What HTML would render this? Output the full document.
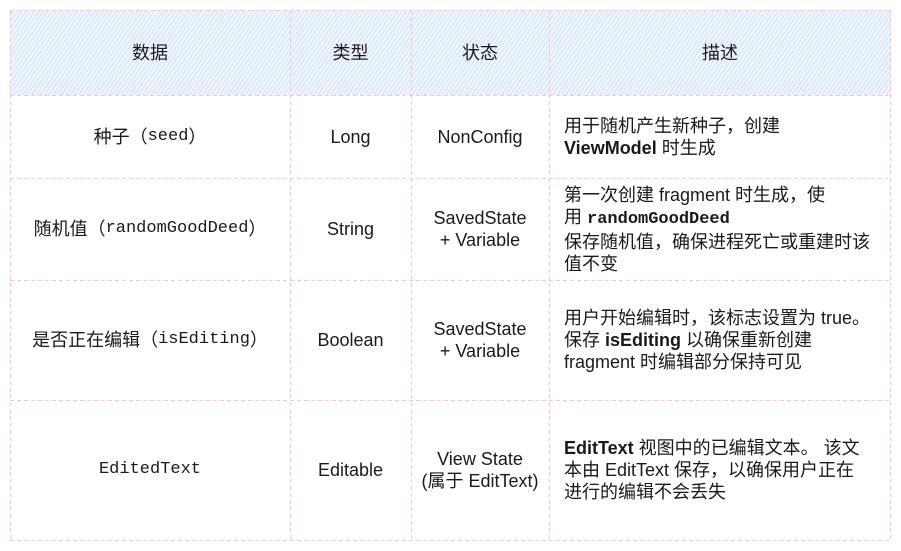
<!DOCTYPE html>
<html><head><meta charset="utf-8"><style>
body{margin:0;background:#fff;width:901px;height:551px;overflow:hidden;font-family:"Liberation Sans","Noto Sans CJK SC",sans-serif;color:#1a1a1a;font-size:18px;}
.c{position:absolute;box-sizing:border-box;display:flex;align-items:center;justify-content:center;text-align:center;line-height:22px;white-space:nowrap;}
.l{justify-content:flex-start;text-align:left;padding-left:15px;}
.h{background:repeating-linear-gradient(-55deg,#cfe0fa 0 1px,#f1f6fe 1px 3.5px);}
.m{font-family:"Liberation Mono","Noto Sans CJK SC",monospace;font-size:17px;}
b{font-weight:bold}
svg{position:absolute;left:0;top:0}
</style></head><body>
<div class="c h" style="left:10px;top:10px;width:881px;height:85px"></div>
<svg width="901" height="551"><g stroke="#f8c4c4" stroke-dasharray="4,3" stroke-width="1" fill="none">
<line x1="10" y1="10.5" x2="891" y2="10.5"/><line x1="10" y1="95.5" x2="891" y2="95.5"/><line x1="10" y1="178.5" x2="891" y2="178.5"/><line x1="10" y1="280.5" x2="891" y2="280.5"/><line x1="10" y1="400.5" x2="891" y2="400.5"/><line x1="10" y1="540.5" x2="891" y2="540.5"/>
<line x1="10.5" y1="10" x2="10.5" y2="541"/><line x1="290.5" y1="10" x2="290.5" y2="541"/><line x1="411.5" y1="10" x2="411.5" y2="541"/><line x1="549.5" y1="10" x2="549.5" y2="541"/><line x1="890.5" y1="10" x2="890.5" y2="541"/></g></svg>
<div class="c" style="left:10px;top:10px;width:280px;height:85px">数据</div>
<div class="c" style="left:290px;top:10px;width:121px;height:85px">类型</div>
<div class="c" style="left:411px;top:10px;width:138px;height:85px">状态</div>
<div class="c" style="left:549px;top:10px;width:342px;height:85px">描述</div>

<div class="c" style="left:10px;top:95px;width:280px;height:83px">种子（<span class="m">seed</span>）</div>
<div class="c" style="left:290px;top:95px;width:121px;height:83px">Long</div>
<div class="c" style="left:411px;top:95px;width:138px;height:83px">NonConfig</div>
<div class="c l" style="left:549px;top:95px;width:342px;height:83px"><div>用于随机产生新种子，创建<br><b>ViewModel</b> 时生成</div></div>

<div class="c" style="left:10px;top:178px;width:280px;height:102px">随机值（<span class="m">randomGoodDeed</span>）</div>
<div class="c" style="left:290px;top:178px;width:121px;height:102px">String</div>
<div class="c" style="left:411px;top:178px;width:138px;height:102px">SavedState<br>+ Variable</div>
<div class="c l" style="left:549px;top:178px;width:342px;height:102px"><div>第一次创建 fragment 时生成，使<br>用 <b class="m">randomGoodDeed</b><br>保存随机值，确保进程死亡或重建时该<br>值不变</div></div>

<div class="c" style="left:10px;top:280px;width:280px;height:120px">是否正在编辑（<span class="m">isEditing</span>）</div>
<div class="c" style="left:290px;top:280px;width:121px;height:120px">Boolean</div>
<div class="c" style="left:411px;top:280px;width:138px;height:120px">SavedState<br>+ Variable</div>
<div class="c l" style="left:549px;top:280px;width:342px;height:120px"><div>用户开始编辑时，该标志设置为 true。<br>保存 <b>isEditing</b> 以确保重新创建<br>fragment 时编辑部分保持可见</div></div>

<div class="c" style="left:10px;top:400px;width:280px;height:140px"><span class="m">EditedText</span></div>
<div class="c" style="left:290px;top:400px;width:121px;height:140px">Editable</div>
<div class="c" style="left:411px;top:400px;width:138px;height:140px">View State<br>(属于 EditText)</div>
<div class="c l" style="left:549px;top:400px;width:342px;height:140px"><div><b>EditText</b> 视图中的已编辑文本。 该文<br>本由 EditText 保存，以确保用户正在<br>进行的编辑不会丢失</div></div>
</body></html>
